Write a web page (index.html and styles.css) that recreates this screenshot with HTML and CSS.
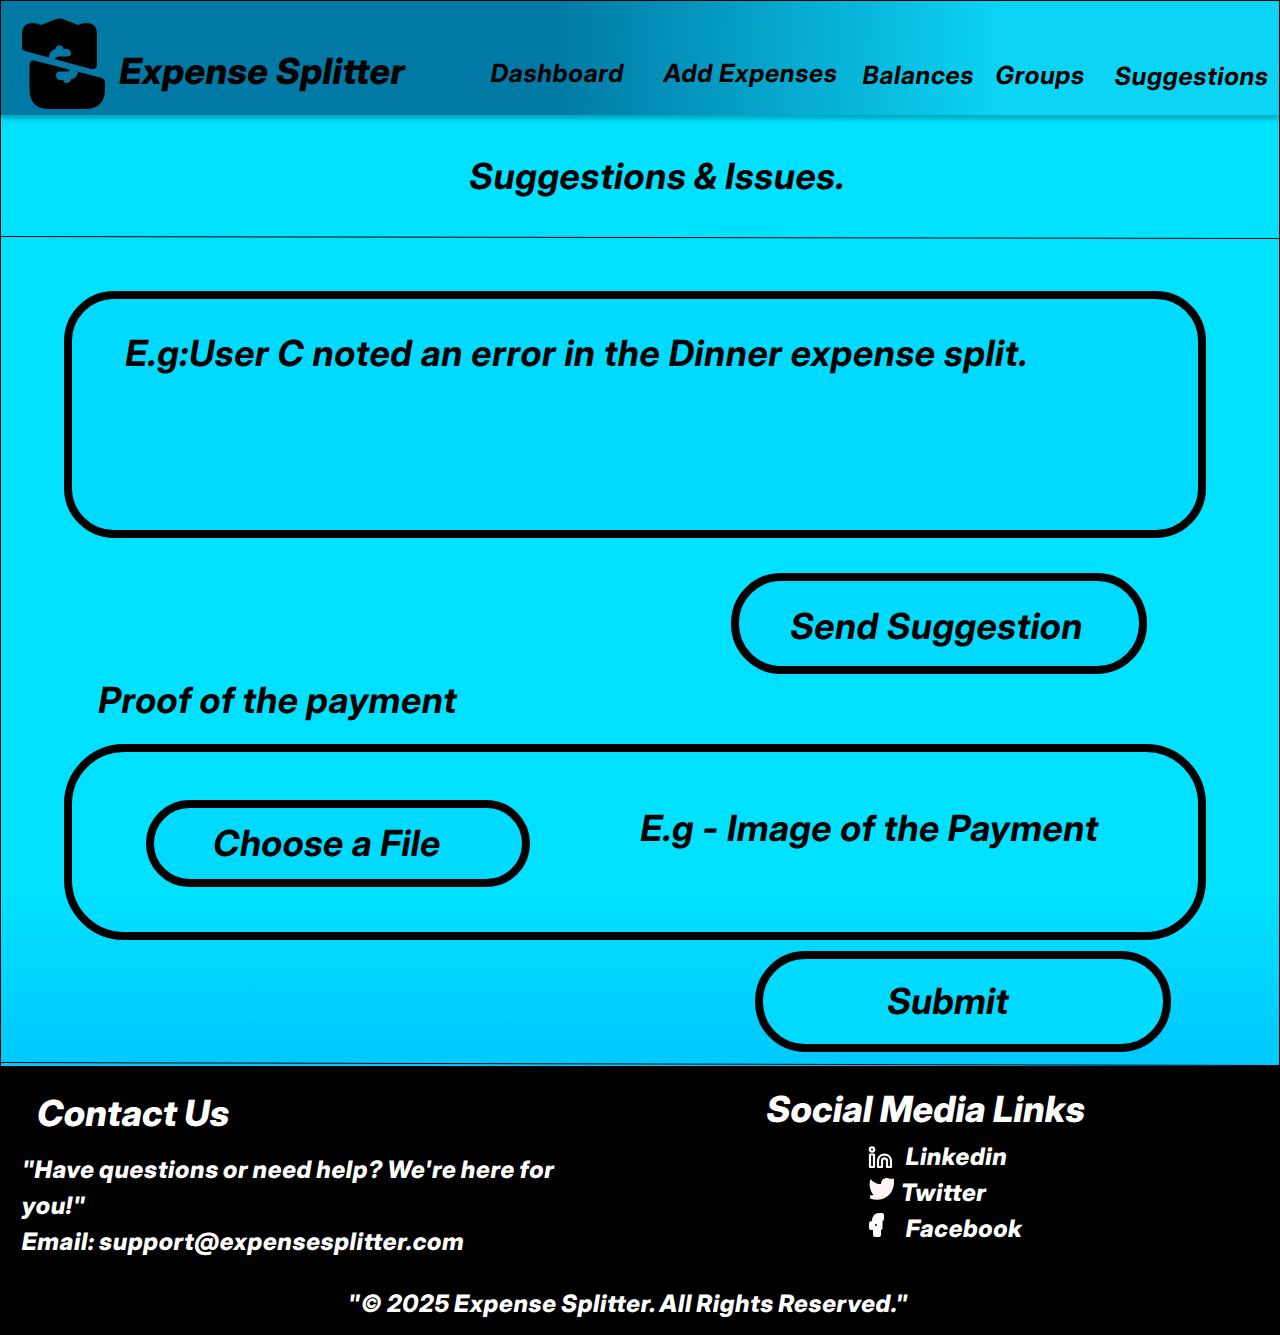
FILE: index.html
```html
<!DOCTYPE html>
<html lang="en">
<head>
<meta charset="utf-8">
<title>Expense Splitter - Suggestions</title>
<link rel="stylesheet" href="styles.css">
</head>
<body>
<div class="page">
  <header class="header">
    <svg class="logo" viewBox="0 0 84 92" width="84" height="92">
      <path d="M0 16Q0 5 11 5Q15 5 19 7L33 1.5Q37.500 -0.500 42 1.500L56 7Q60 5 64 5Q75 5 75 16V46Q75 52 69 51L3 33Q0 32 0 29Z"/>
      <path d="M7.500 48Q7.500 41 14 43L80 60Q83 61 83 65V71Q83 91 63 91H27Q7.500 91 7.500 71Z"/>
      <path class="cut" d="M26.500 41C27 35 29.500 32 33.500 31C34 26 41 26 41.500 31H45Q49 31.500 49 35Q49 38.500 45 38.500H36Q34 38.500 33 41L34 43Z"/>
      <path class="cut" d="M48 51.500L56 54C55 59 52 61 49 61C49 66 41.500 66 41 62H38Q34 61.500 34 57.500Q34 53.500 38 53.500H47Z"/>
    </svg>
    <h1 class="brand"><span class="slant">Expense Splitter</span></h1>
    <nav class="nav">
      <a><span class="slant">Dashboard</span></a>
      <a><span class="slant">Add Expenses</span></a>
      <a class="low"><span class="slant">Balances</span></a>
      <a class="low"><span class="slant">Groups</span></a>
      <a class="lower"><span class="slant">Suggestions</span></a>
    </nav>
  </header>
  <main class="main">
    <h2 class="title"><span class="slant">Suggestions &amp; Issues.</span></h2>
    <svg class="rule" viewBox="0 0 1278 4" width="1278" height="4"><path d="M0 1.500L1278 3.500"/></svg>
    <section class="message"><span class="slant">E.g:User C noted an error in the Dinner expense split.</span></section>
    <div class="pill send"><span class="slant">Send Suggestion</span></div>
    <h3 class="proof-title"><span class="slant">Proof of the payment</span></h3>
    <section class="proof">
      <div class="pill choose"><span class="slant">Choose a File</span></div>
      <div class="hint"><span class="slant">E.g - Image of the Payment</span></div>
    </section>
    <div class="pill submit"><span class="slant">Submit</span></div>
    <svg class="rule rule-end" viewBox="0 0 1278 5" width="1278" height="5"><path d="M0 1.500L1278 4.500"/></svg>
  </main>
  <footer class="footer">
    <div class="columns">
      <section class="contact">
        <h3><span class="slant">Contact Us</span></h3>
        <p><span class="slant">"Have questions or need help? We're here for</span><br><span class="slant">you!"</span><br><span class="slant">Email: support@expensesplitter.com</span></p>
      </section>
      <section class="social">
        <h3><span class="slant">Social Media Links</span></h3>
        <ul>
          <li>
            <svg width="26" height="24" viewBox="0 0 26 24" class="line"><circle cx="4" cy="3.500" r="2.200"/><path d="M2 8.500H6V21H2ZM10 21V15C10 6.500 23 6.500 23 15V21H19V15C19 11.500 14 11.500 14 15V21Z"/></svg>
            <span class="slant">Linkedin</span>
          </li>
          <li class="twitter">
            <svg width="26" height="24" viewBox="0 0 26 24"><path d="M1.500 1C4 4 8 6.500 12 6C12 1 17 -1.500 21.500 1L25 0.500V5C24 19 12 24.500 1 20.500V17.500L4.500 17C1 13 -0.500 6 1.500 1Z"/></svg>
            <span class="slant">Twitter</span>
          </li>
          <li>
            <svg width="26" height="26" viewBox="0 0 26 26"><path d="M11 1H14Q16 1 16 3V7Q16 9 14.500 9V16Q14.500 18 13 18V23Q13 25 11 25H7Q5 25 5 23V18H3Q1 18 1 16V12Q1 9 4 9Q4.500 1 11 1Z"/><circle class="dot" cx="8" cy="13" r="1"/></svg>
            <span class="slant">Facebook</span>
          </li>
        </ul>
      </section>
    </div>
    <p class="copyright"><span class="slant">"© 2025 Expense Splitter. All Rights Reserved."</span></p>
  </footer>
</div>
</body>
</html>
```

FILE: styles.css
```css
* { box-sizing: border-box; }
body {
  margin: 0;
  font-family: "Inter Display", Inter, "Liberation Sans", sans-serif;
  font-weight: 700;
  color: #000;
}
h1, h2, h3, p, ul { margin: 0; padding: 0; font-size: 36px; line-height: 44px; white-space: nowrap; }
/* Oblique cut of the upright face, keeping the two-storey "a" */
.slant { display: inline-block; transform: skewX(-9.4deg); }
.page {
  width: 1280px;
  height: 1335px;
  border: 1px solid #000;
  display: flex;
  flex-direction: column;
  letter-spacing: 0.640px;
}
.header {
  position: relative;
  height: 114px;
  flex: none;
  display: grid;
  grid-template-columns: 98px 371px 1fr;
  padding-left: 21px;
  background: linear-gradient(92deg, #007aa5 43.500%, #0cd4f5 78.500%);
  box-shadow: 0 4px 4px rgba(0, 0, 0, 0.250);
}
.logo { margin-top: 17px; }
.logo .cut { fill: #007aa5; }
.brand { margin-top: 48px; font-weight: 800; letter-spacing: 0.380px; }
.nav {
  display: grid;
  grid-template-columns: 173px 199px 133px 119px 1fr;
  font-size: 25px;
  line-height: 30px;
  letter-spacing: 0.770px;
  padding-top: 57px;
  white-space: nowrap;
}
.nav .low { padding-top: 2px; }
.nav .lower { padding-top: 3px; }
.main {
  height: 951px;
  flex: none;
  display: flex;
  flex-direction: column;
  align-items: flex-start;
  font-size: 36px;
  line-height: 44px;
  white-space: nowrap;
  background: linear-gradient(#00e0ff 82%, #00caff 98%);
}
.title { margin: 39px 0 0 469px; word-spacing: -1px; letter-spacing: 0.660px; }
.rule { display: block; flex: none; margin-top: 37px; }
.rule path { fill: none; stroke: #000; stroke-width: 1; }
.message {
  width: 1142px;
  height: 247px;
  margin: 52px 0 0 63px;
  padding: 32px 0 0 54px;
  border: 8px solid #000;
  border-radius: 50px;
  background: #00daff;
  letter-spacing: 0.630px;
}
.pill {
  width: 416px;
  height: 101px;
  border: 8px solid #000;
  border-radius: 50px;
  background: #00daff;
}
.send { margin: 35px 0 0 730px; padding: 23px 0 0 52px; letter-spacing: 0.500px; }
.proof-title { margin: 4px 0 0 98px; letter-spacing: 0.500px; word-spacing: -0.500px; }
.proof {
  display: flex;
  width: 1142px;
  height: 196px;
  margin: 22px 0 0 63px;
  padding: 48px 0 0 74px;
  border: 8px solid #000;
  border-radius: 60px;
}
.choose { width: 384px; height: 87px; padding: 13px 0 0 60px; letter-spacing: 0.400px; }
.hint { margin: 6px 0 0 111px; letter-spacing: 0.480px; }
.submit { margin: 11px 0 0 754px; padding: 20px 0 0 125px; letter-spacing: 0.200px; }
.rule-end { margin-top: 9px; }
.footer {
  flex: 1;
  background: #000;
  color: #fff;
  font-weight: 800;
}
.footer h3 { font-weight: 800; letter-spacing: 0.150px; }
.footer p { letter-spacing: 0.720px; word-spacing: -1.200px; }
.columns { display: grid; grid-template-columns: 766px 1fr; height: 219px; }
.contact { padding: 25px 0 0 21px; }
.contact h3 { padding-left: 16px; }
.contact p { margin-top: 17px; font-size: 24px; line-height: 36px; }
.social { padding-top: 21px; }
.social ul { list-style: none; margin: 8px 0 0 101px; font-size: 24px; line-height: 36px; }
.social li { display: flex; height: 36px; }
.social svg { margin: 7px 12px 0 0; fill: #fff; flex: none; }
.social .line { fill: none; stroke: #fff; stroke-width: 2.200; stroke-linejoin: round; }
.social .twitter svg { margin: 3px 6px 0 1px; fill: #fff5f5; }
.social li:last-child svg { margin-top: 1px; }
.social .dot { fill: #000; }
.copyright { padding: 1px 0 0 347px; font-size: 24px; line-height: 36px; }
```
